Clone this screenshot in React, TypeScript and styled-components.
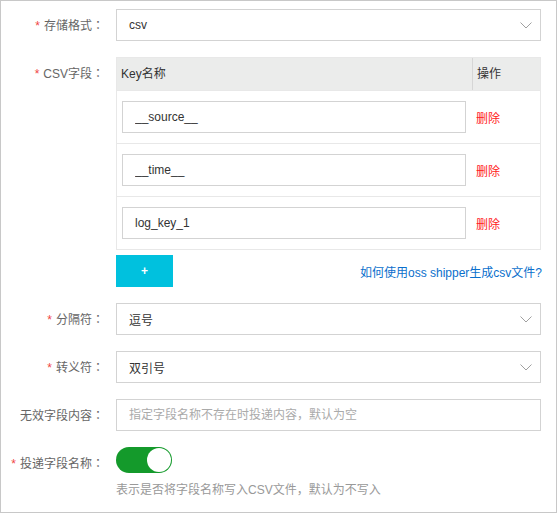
import React from "react";
import styled, { createGlobalStyle } from "styled-components";

const Global = createGlobalStyle`
  html, body { margin: 0; padding: 0; background: #fff; }
  body { font-family: "Liberation Sans", "Noto Sans CJK SC", sans-serif; font-size: 12px; color: #333; }
  * { box-sizing: border-box; }
`;

const Frame = styled.div`
  width: 557px;
  height: 513px;
  border: 1px solid #c8c8c8;
  padding-top: 8px;
  background: #fff;
  overflow: hidden;
`;

const Item = styled.div<{ $gap?: number }>`
  display: flex;
  align-items: flex-start;
  margin-bottom: ${(p) => (p.$gap ?? 16)}px;
`;

const Label = styled.div`
  width: 115px;
  height: 32px;
  flex: none;
  padding-right: 12px;
  text-align: right;
  line-height: 32px;
  font-size: 12px;
  color: #666;
  white-space: nowrap;
  overflow: visible;
`;

const Star = styled.span`
  color: #f04545;
  margin-right: 4px;
  font-family: "Liberation Sans", sans-serif;
`;

const Colon = styled.span`
  font-family: "Noto Sans CJK TC", "Noto Sans CJK SC", sans-serif;
`;

const Control = styled.div`
  width: 425px;
  flex: none;
`;

const SelectBox = styled.div`
  height: 32px;
  border: 1px solid #d3d3d3;
  display: flex;
  align-items: center;
  justify-content: space-between;
  padding: 0 8px 0 12px;
  color: #333;
  font-size: 12px;
  background: #fff;
`;

const TextInput = styled.input`
  display: block;
  width: 100%;
  height: 32px;
  border: 1px solid #d3d3d3;
  padding: 0 12px;
  margin: 0;
  font-family: "Liberation Sans", "Noto Sans CJK SC", sans-serif;
  font-size: 12px;
  color: #333;
  background: #fff;
  outline: none;
  &::placeholder {
    color: #aaa;
  }
`;

const Table = styled.div`
  border: 1px solid #e8e8e8;
  display: grid;
  grid-template-columns: 1fr 68px;
`;

const HeadCell = styled.div<{ $divider?: boolean }>`
  height: 32px;
  line-height: 32px;
  background: #ebeceb;
  color: #333;
  font-size: 12px;
  padding-left: 4px;
  border-left: ${(p) => (p.$divider ? "1px solid #d6d6d6" : "none")};
`;

const BodyCell = styled.div<{ $op?: boolean }>`
  height: 53px;
  border-top: 1px solid #e8e8e8;
  padding: ${(p) => (p.$op ? "0 0 0 4px" : "0 6px 0 5px")};
  display: flex;
  align-items: center;
`;

const DeleteLink = styled.span`
  color: #ff2020;
  font-size: 12px;
  cursor: pointer;
`;

const ActionRow = styled.div`
  display: flex;
  align-items: center;
  justify-content: space-between;
  margin-top: 5px;
`;

const AddButton = styled.button`
  width: 57px;
  height: 32px;
  border: none;
  background: #00c1de;
  color: #fff;
  font-family: "Liberation Sans", sans-serif;
  font-weight: bold;
  font-size: 12px;
  padding: 0;
  cursor: pointer;
`;

const HelpLink = styled.a`
  color: #0a6fcc;
  font-size: 12px;
  text-decoration: none;
  margin-right: -1px;
`;

const Switch = styled.div<{ $on: boolean }>`
  width: 56px;
  height: 26px;
  border-radius: 13px;
  background: ${(p) => (p.$on ? "#149a2b" : "#ccc")};
  display: flex;
  align-items: center;
  justify-content: ${(p) => (p.$on ? "flex-end" : "flex-start")};
  padding: 0 1px;
`;

const Knob = styled.div`
  width: 24px;
  height: 24px;
  border-radius: 50%;
  background: #fff;
`;

const Hint = styled.div`
  margin-top: 7px;
  line-height: 20px;
  font-size: 12px;
  color: #999;
`;

const Chevron = () => (
  <svg width="12" height="7" viewBox="0 0 12 7" fill="none">
    <path d="M0.5 0.5 L6 6 L11.5 0.5" stroke="#a0a0a0" strokeWidth="1" />
  </svg>
);

const Select = ({ value }: { value: string }) => (
  <SelectBox>
    <span>{value}</span>
    <Chevron />
  </SelectBox>
);

const FieldLabel = ({ text, required }: { text: string; required?: boolean }) => (
  <Label>
    {required && <Star>*</Star>}
    {text}
    <Colon>：</Colon>
  </Label>
);

const keys = ["__source__", "__time__", "log_key_1"];

export default function App() {
  return (
    <>
      <Global />
      <Frame>
        <Item>
          <FieldLabel text="存储格式" required />
          <Control>
            <Select value="csv" />
          </Control>
        </Item>
        <Item>
          <FieldLabel text="CSV字段" required />
          <Control>
            <Table>
              <HeadCell>Key名称</HeadCell>
              <HeadCell $divider>操作</HeadCell>
              {keys.map((k) => (
                <React.Fragment key={k}>
                  <BodyCell>
                    <TextInput defaultValue={k} readOnly />
                  </BodyCell>
                  <BodyCell $op>
                    <DeleteLink>删除</DeleteLink>
                  </BodyCell>
                </React.Fragment>
              ))}
            </Table>
            <ActionRow>
              <AddButton>+</AddButton>
              <HelpLink href="#">如何使用oss shipper生成csv文件?</HelpLink>
            </ActionRow>
          </Control>
        </Item>
        <Item>
          <FieldLabel text="分隔符" required />
          <Control>
            <Select value="逗号" />
          </Control>
        </Item>
        <Item>
          <FieldLabel text="转义符" required />
          <Control>
            <Select value="双引号" />
          </Control>
        </Item>
        <Item>
          <FieldLabel text="无效字段内容" />
          <Control>
            <TextInput placeholder="指定字段名称不存在时投递内容，默认为空" readOnly />
          </Control>
        </Item>
        <Item>
          <FieldLabel text="投递字段名称" required />
          <Control>
            <Switch $on>
              <Knob />
            </Switch>
            <Hint>表示是否将字段名称写入CSV文件，默认为不写入</Hint>
          </Control>
        </Item>
      </Frame>
    </>
  );
}
